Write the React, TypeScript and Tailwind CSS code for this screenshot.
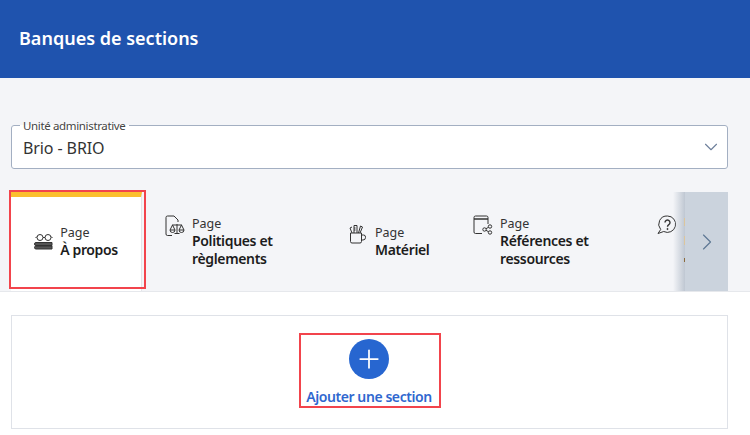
import type { ReactNode } from "react";
import { ChevronDown, ChevronRight, Plus } from "lucide-react";

const font = { fontFamily: '"Noto Sans", sans-serif' };

function BooksIcon() {
  return (
    <svg width="20" height="16" viewBox="0 0 20 16" fill="none" stroke="#333" strokeWidth="1">
      <circle cx="6" cy="3.500" r="3" />
      <circle cx="14" cy="3.500" r="3" />
      <path d="M9 3.500h2M3 2.500 1.500 4M17 2.500 18.500 4" />
      <path d="M2 8.500h16v3H2a1.500 1.500 0 0 1 0-3Z" fill="#555" />
      <path d="M2 12h16v3H2a1.500 1.500 0 0 1 0-3Z" fill="#555" />
    </svg>
  );
}

function ScaleDocIcon() {
  return (
    <svg width="20" height="22" viewBox="0 0 20 22" fill="none" stroke="#333" strokeWidth="1">
      <path d="M7 20.500H2.500A1.500 1.500 0 0 1 1 19V2.500A1.500 1.500 0 0 1 2.500 1H9l4 4v2" />
      <path d="M12 9v9M7 10h10M9.500 18.500h5" />
      <path d="M7.500 10 5 15h5ZM16.500 10 14 15h5Z" />
      <path d="M5 15a2.500 2.500 0 0 0 5 0M14 15a2.500 2.500 0 0 0 5 0" />
    </svg>
  );
}

function MugIcon() {
  return (
    <svg width="19" height="20" viewBox="0 0 19 20" fill="none" stroke="#333" strokeWidth="1">
      <path d="M1.500 9h11v8.500a1.500 1.500 0 0 1-1.500 1.500H3a1.500 1.500 0 0 1-1.500-1.500Z" />
      <path d="M12.500 11h2a2 2 0 0 1 2 2v.5a2.500 2.500 0 0 1-2.500 2.500h-1.500" />
      <path d="M5 9V1.500h3V9M3 9 1 4l2-1M9.500 9l2-7 2 1-2.500 6" />
      <path d="M5 4h1.500M5 6h1.500" />
    </svg>
  );
}

function WindowShareIcon() {
  return (
    <svg width="20" height="20" viewBox="0 0 20 20" fill="none" stroke="#333" strokeWidth="1">
      <path d="M9 18.500H2.500A1.500 1.500 0 0 1 1 17V2.500A1.500 1.500 0 0 1 2.500 1h11A1.500 1.500 0 0 1 15 2.500V9" />
      <path d="M1 4h14" strokeWidth="1.500" />
      <circle cx="11.500" cy="14.500" r="1.700" />
      <circle cx="17" cy="11.500" r="1.700" />
      <circle cx="17" cy="17.500" r="1.700" />
      <path d="m13 13.700 2.500-1.400M13 15.300l2.500 1.400" />
    </svg>
  );
}

function HelpBubbleIcon() {
  return (
    <svg width="20" height="20" viewBox="0 0 20 20" fill="none" stroke="#333" strokeWidth="1">
      <path d="M10.500 1a8.200 8.200 0 1 1-3.800 15.500L1 18.500l2.700-4A8.200 8.200 0 0 1 10.500 1Z" />
      <path d="M8 7.500a2.500 2.500 0 1 1 3.800 2.100c-.9.600-1.300 1-1.300 2.100" strokeWidth="1.400" />
      <circle cx="10.500" cy="14" r=".6" fill="#333" />
    </svg>
  );
}

function TabLabel({ title }: { title: ReactNode }) {
  return (
    <div>
      <div className="text-[12.500px] leading-[16px] text-[#333]">Page</div>
      <div className="text-[14px] font-semibold leading-[18px] tracking-[-0.35px] text-[#1c1c1c]">{title}</div>
    </div>
  );
}

function PageTab({ icon, title, className }: { icon: ReactNode; title: ReactNode; className: string }) {
  return (
    <div className={`flex shrink-0 items-center ${className}`}>
      <div className="flex items-start gap-[7px]">
        <span className="mt-[-1px] shrink-0">{icon}</span>
        <TabLabel title={title} />
      </div>
    </div>
  );
}

export default function App() {
  return (
    <div className="relative h-[435px] w-[750px] overflow-hidden bg-white" style={font}>
      <header className="flex h-[78px] items-center bg-[#1f53ae] pb-[2px] pl-[19px]">
        <h1 className="text-[18px] font-semibold text-white">Banques de sections</h1>
      </header>

      <div className="h-[213px] bg-[#f4f5f8] pt-[47px]">
        {/* Sélecteur d'unité */}
        <fieldset className="mx-[11px] -mt-[6px] h-[50px] w-[717px] rounded-[3px] border border-[#a3afc2] bg-white px-[8px]">
          <legend className="px-[3px] text-[11.500px] leading-[13px] tracking-[-0.35px] text-[#444]">
            Unité administrative
          </legend>
          <div className="-mr-[3px] flex items-center justify-between pt-[4px]">
            <span className="pl-[3px] text-[16px] leading-[22px] tracking-[-0.1px] text-[#333]">Brio - BRIO</span>
            <ChevronDown size={22} strokeWidth={1.200} className="mb-[2px] text-[#6d7f9b]" />
          </div>
        </fieldset>

        {/* Onglets */}
        <div className="relative mt-[23px] flex h-[99px] overflow-hidden">
          <div className="ml-[11px] flex h-[99px] w-[131px] shrink-0 items-center justify-center border-t-[5px] border-r border-t-[#fbbf2e] border-r-[#e3e5ea] bg-white pb-[5px]">
            <div className="flex items-center gap-[6px]">
              <BooksIcon />
              <TabLabel title="À propos" />
            </div>
          </div>
          <PageTab
            icon={<ScaleDocIcon />}
            title={
              <>
                Politiques et
                <br />
                règlements
              </>
            }
            className="ml-[23px] w-[184px]"
          />
          <PageTab icon={<MugIcon />} title="Matériel" className="w-[124px]" />
          <PageTab
            icon={<WindowShareIcon />}
            title={
              <>
                Références et
                <br />
                ressources
              </>
            }
            className="w-[184px]"
          />
          <div className="shrink-0 pt-[23px]">
            <HelpBubbleIcon />
          </div>

          {/* Dégradé et bouton suivant par-dessus les onglets */}
          <div className="absolute top-0 right-[65px] bottom-0 w-[12px] bg-gradient-to-r from-transparent to-[#bfc7d2]" />
          <div className="absolute top-[26px] right-[65px] h-[8px] w-[1px] bg-[#dcc59c]" />
          <div className="absolute top-[44px] right-[65px] h-[9px] w-[1px] bg-[#dcc59c]" />
          <div className="absolute top-[66px] right-[65px] h-[4px] w-[1px] bg-[#8a6a3c]" />
          <div className="absolute top-0 right-[22px] bottom-0 flex w-[43px] items-center justify-center bg-[#cbd3dd]">
            <ChevronRight size={28} strokeWidth={1} className="text-[#5e7894]" />
          </div>
        </div>
      </div>

      <div className="border-t border-[#e6e8ec] bg-white pt-[23px]">
        <div className="mx-[11px] flex h-[114px] w-[717px] flex-col items-center border border-[#dfe2e8] pt-[23px] pr-[1px]">
          <span className="flex size-[40px] items-center justify-center rounded-full bg-[#2766d0]">
            <Plus size={30} strokeWidth={1.400} className="text-white" />
          </span>
          <span className="mt-[8px] text-[14px] font-semibold leading-[20px] tracking-[-0.42px] text-[#2f67cf]">
            Ajouter une section
          </span>
        </div>
      </div>

      {/* Annotations rouges posées sur la capture */}
      <div className="pointer-events-none absolute top-[190px] left-[9px] h-[99px] w-[137px] border-2 border-[#f2444c]" />
      <div className="pointer-events-none absolute top-[333px] left-[299px] h-[75px] w-[142px] border-2 border-[#f2444c]" />
    </div>
  );
}
